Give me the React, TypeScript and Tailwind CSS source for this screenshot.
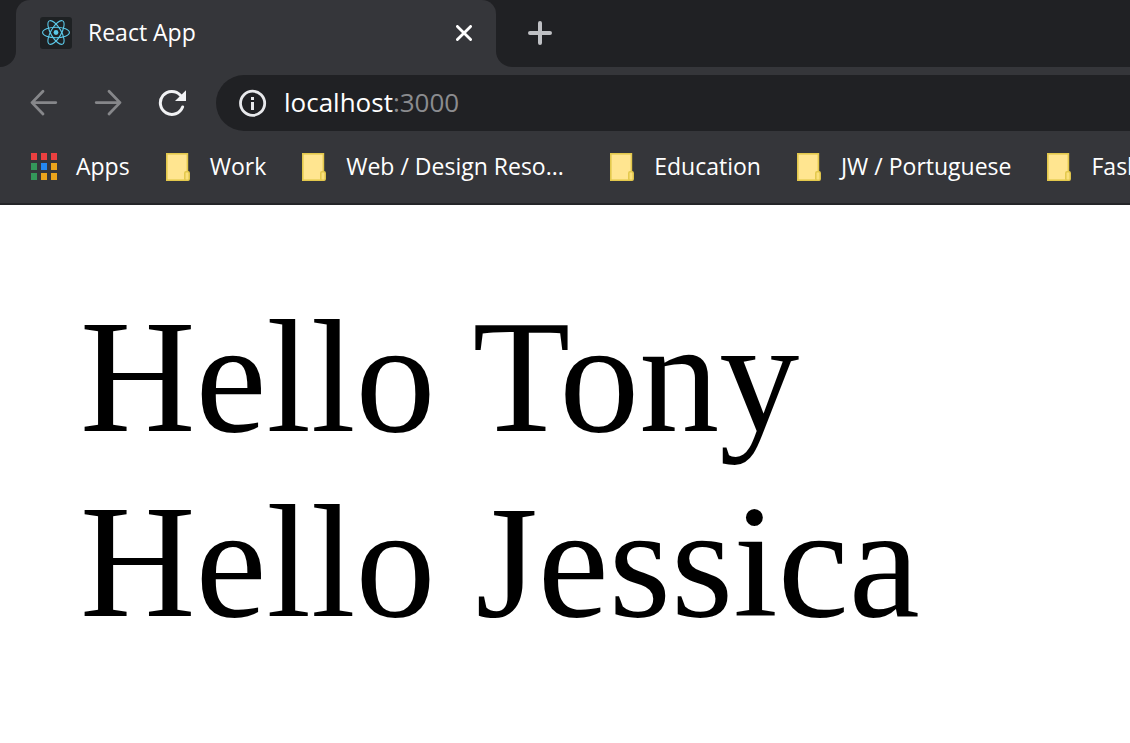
import React from "react";

const greetings = ["Tony", "Jessica"];

const bookmarks = [
  { name: "Work" },
  { name: "Web / Design Reso...", shortened: true },
  { name: "Education" },
  { name: "JW / Portuguese" },
  { name: "Fashion" },
];

const appTiles = [
  "#ea4040", "#ea4040", "#ea4040",
  "#34975a", "#2488f0", "#eaa41c",
  "#34975a", "#eaa41c", "#eaa41c",
];

function ReactLogo() {
  return (
    <svg viewBox="0 0 32 32" className="size-8 shrink-0" aria-hidden="true">
      <rect width="32" height="32" rx="3" fill="#1e2123" />
      <g fill="none" stroke="#5bc9e8" strokeWidth="1.1">
        <ellipse cx="16" cy="15.5" rx="13.4" ry="5.2" />
        <ellipse cx="16" cy="15.5" rx="13.4" ry="5.2" transform="rotate(60 16 15.5)" />
        <ellipse cx="16" cy="15.5" rx="13.4" ry="5.2" transform="rotate(120 16 15.5)" />
      </g>
      <circle cx="16" cy="15.5" r="2.4" fill="#5bc9e8" />
    </svg>
  );
}

function CloseIcon() {
  return (
    <svg viewBox="0 0 16 16" className="size-4" aria-hidden="true">
      <path d="M1.4 1.4 14.6 14.6M14.6 1.4 1.4 14.6" stroke="#fff" strokeWidth="2.8" strokeLinecap="round" />
    </svg>
  );
}

function PlusIcon() {
  return (
    <svg viewBox="0 0 24 24" className="size-6" aria-hidden="true">
      <path d="M12 2v20M2 12h20" stroke="#bfc0c4" strokeWidth="4" strokeLinecap="round" />
    </svg>
  );
}

function ArrowIcon({ forward = false }: { forward?: boolean }) {
  return (
    <svg viewBox="0 0 28 28" className="size-7" aria-hidden="true">
      <path
        d={forward ? "M2.2 13.6H26M15 2.2 26 13.6 15 25" : "M25.8 13.6H2M13 2.2 2 13.6 13 25"}
        fill="none"
        stroke="#86878a"
        strokeWidth="2.8"
        strokeLinecap="round"
        strokeLinejoin="round"
      />
    </svg>
  );
}

function ReloadIcon() {
  return (
    <svg viewBox="0 0 28 28" className="size-7" aria-hidden="true">
      <path
        d="M24.6 18A11.5 11.5 0 1 1 22.4 6.2"
        fill="none"
        stroke="#f1f2f4"
        strokeWidth="3"
        strokeLinecap="round"
      />
      <path d="M28 1.2V12H17Z" fill="#f1f2f4" />
    </svg>
  );
}

function InfoIcon() {
  return (
    <svg viewBox="0 0 28 28" className="size-7" aria-hidden="true">
      <circle cx="13.6" cy="14.3" r="12.1" fill="none" stroke="#e8e9ec" strokeWidth="2.8" />
      <path d="M12 8h3v3h-3zM12 13h3v8h-3z" fill="#e8e9ec" />
    </svg>
  );
}

function AppsIcon() {
  return (
    <svg viewBox="0 0 28 28" className="size-7 shrink-0" aria-hidden="true">
      {appTiles.map((color, i) => (
        <rect key={i} x={1 + (i % 3) * 10} y={Math.floor(i / 3) * 10} width="6" height="7" fill={color} />
      ))}
    </svg>
  );
}

function FolderIcon() {
  return (
    <svg viewBox="0 0 24 28" className="h-7 w-6 shrink-0" aria-hidden="true">
      <rect x="0.8" y="0.8" width="20.6" height="26.4" fill="#ffe590" stroke="#e3c84c" strokeWidth="1.6" />
      <rect x="18.8" y="18.8" width="4.4" height="8.4" rx="1.2" fill="#fbe07c" stroke="#e3c84c" strokeWidth="1.5" />
    </svg>
  );
}

export default function App() {
  return (
    <div className="min-h-screen overflow-hidden bg-white">
      <header className="bg-[#35363a] font-['Open_Sans',sans-serif] text-white">
        <div className="flex h-[67px]">
          <div className="w-4 shrink-0 rounded-br-2xl bg-[#202124]" />
          <div className="w-[480px] shrink-0 bg-[#202124]">
            <div className="flex h-full items-center gap-4 rounded-t-[14px] bg-[#35363a] px-6 pb-0.5">
              <ReactLogo />
              <span className="grow text-[23px]">React App</span>
              <button type="button" aria-label="Close tab">
                <CloseIcon />
              </button>
            </div>
          </div>
          <div className="flex grow items-center rounded-bl-2xl bg-[#202124] pb-0.5 pl-8">
            <button type="button" aria-label="New tab">
              <PlusIcon />
            </button>
          </div>
        </div>

        <div className="flex items-center pt-2 pl-[30px]">
          <div className="flex w-[186px] shrink-0 gap-9">
            <button type="button" aria-label="Back"><ArrowIcon /></button>
            <button type="button" aria-label="Forward"><ArrowIcon forward /></button>
            <button type="button" aria-label="Reload"><ReloadIcon /></button>
          </div>
          <div className="flex h-14 grow items-center rounded-l-full bg-[#202124] pl-[23px] text-[26px]">
            <button type="button" aria-label="Site information" className="mr-[17px]">
              <InfoIcon />
            </button>
            <input
              aria-label="Host"
              defaultValue="localhost"
              className="field-sizing-content bg-transparent pb-0.5 outline-none"
            />
            <input
              aria-label="Port"
              defaultValue=":3000"
              className="min-w-0 grow bg-transparent pb-0.5 text-[#8b8c8f] outline-none"
            />
          </div>
        </div>

        <nav
          aria-label="Bookmarks"
          className="flex h-[74px] items-center gap-9 overflow-hidden border-b-2 border-[#242528] pl-[30px] text-[23px] whitespace-nowrap"
        >
          <a href="#apps" className="flex shrink-0 items-center gap-[18px]">
            <AppsIcon />
            <span className="pb-0.5">Apps</span>
          </a>
          {bookmarks.map(({ name, shortened }) => (
            <a key={name} href="#bookmark" className="flex shrink-0 items-center gap-5">
              <FolderIcon />
              <span className={shortened ? "w-[228px] pb-0.5" : "pb-0.5"}>{name}</span>
            </a>
          ))}
        </nav>
      </header>

      <main className="px-20 pt-20 font-['Liberation_Serif',serif] text-[160px] leading-[185px] text-black">
        {greetings.map((name) => (
          <div key={name}>Hello {name}</div>
        ))}
      </main>
    </div>
  );
}
